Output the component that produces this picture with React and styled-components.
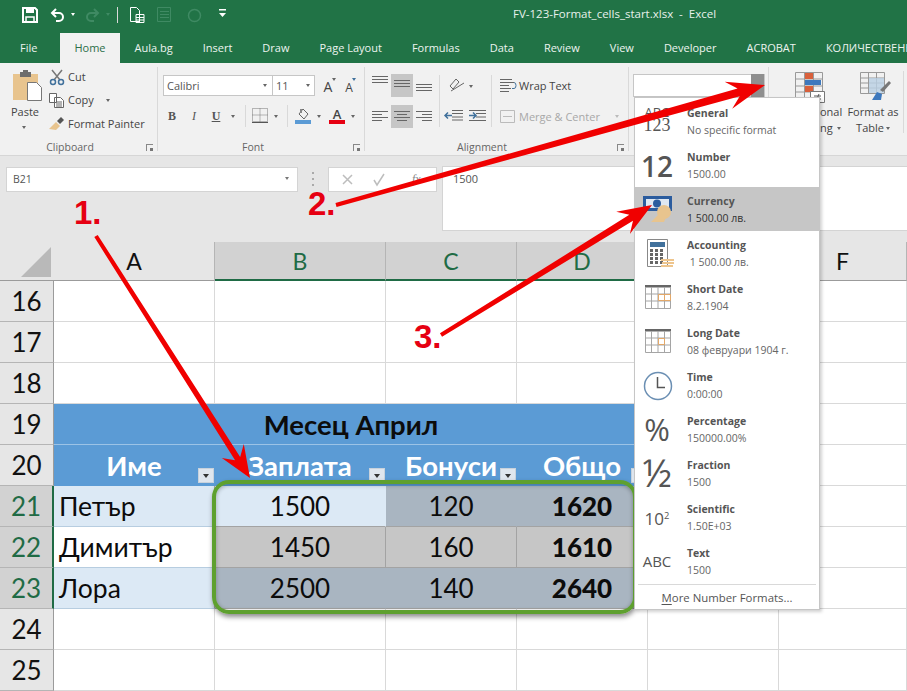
import React from "react";
import styled, { createGlobalStyle, css } from "styled-components";

const green = "#217346";
const uiFont = `"Open Sans", "Noto Sans", "Liberation Sans", sans-serif`;
const sheetFont = `Lato, "Noto Sans", sans-serif`;

const GlobalStyle = createGlobalStyle`
  html, body { margin: 0; padding: 0; background: #fff; }
  body { font-family: ${uiFont}; overflow: hidden; }
`;

const at = css`
  position: absolute;
  left: ${(p) => p.$x}px;
  top: ${(p) => p.$y}px;
`;

const Page = styled.div`
  position: relative;
  width: 907px;
  height: 691px;
  overflow: hidden;
  background: #e6e6e6;
`;

const TitleBar = styled.div`
  position: absolute;
  inset: 0 0 auto 0;
  height: 33px;
  background: ${green};
`;

const Title = styled.div`
  position: absolute;
  left: 513px;
  top: 6px;
  color: #e8f1ec;
  font-size: 11.5px;
  line-height: 16px;
  white-space: pre;
`;

const TabStrip = styled.div`
  position: absolute;
  left: 0;
  right: 0;
  top: 33px;
  height: 30px;
  padding-left: 5px;
  display: flex;
  background: ${green};
  overflow: hidden;
`;

const Tab = styled.div`
  flex: none;
  padding: 0 ${(p) => (p.$active ? 14 : 15)}px;
  font-size: 11px;
  line-height: 30px;
  white-space: nowrap;
  color: ${(p) => (p.$active ? "#2c6e49" : "#edf4f0")};
  background: ${(p) => (p.$active ? "#f1f1f1" : "transparent")};
  &:first-child {
    margin-right: 8px;
  }
`;

const Ribbon = styled.div`
  position: absolute;
  left: 0;
  right: 0;
  top: 63px;
  height: 92px;
  background: #f1f1f1;
  border-bottom: 1px solid #d6d6d6;
`;

const Divider = styled.div`
  ${at}
  width: 1px;
  height: ${(p) => p.$h}px;
  background: #d9d9d9;
`;

const RibbonText = styled.div`
  ${at}
  transform: translateY(-50%);
  font-size: 11px;
  line-height: 14px;
  white-space: nowrap;
  color: ${(p) => (p.$dim ? "#a8a8a8" : "#444")};
`;

const CenteredText = styled(RibbonText)`
  transform: translate(-50%, -50%);
  text-align: center;
`;

const GroupLabel = styled(CenteredText)`
  color: #666;
  font-size: 10.5px;
`;

const FontLetter = styled(CenteredText)`
  font-size: ${(p) => p.$size}px;
  font-weight: ${(p) => p.$weight || 400};
`;

const Caret = styled.div`
  ${at}
  width: 0;
  height: 0;
  border-left: 2.5px solid transparent;
  border-right: 2.5px solid transparent;
  border-top: 3px solid ${(p) => p.$color || "#666"};
`;

const Launcher = styled.div`
  ${at}
  width: 6px;
  height: 6px;
  border-left: 1px solid #888;
  border-top: 1px solid #888;
  &::after {
    content: "";
    position: absolute;
    right: 0;
    bottom: 0;
    width: 3px;
    height: 3px;
    background: #777;
  }
`;

const ComboBox = styled.div`
  ${at}
  width: ${(p) => p.$w}px;
  height: ${(p) => p.$h}px;
  box-sizing: border-box;
  background: #fff;
  border: 1px solid #c6c6c6;
  padding-left: 3px;
  font-size: 11px;
  line-height: ${(p) => p.$h - 2}px;
  color: #555;
`;

const NumberDrop = styled.div`
  ${at}
  width: 13px;
  height: 23px;
  background: #8f8f8f;
`;

const Highlight = styled.div`
  ${at}
  width: 22px;
  height: 23px;
  background: #c6c6c6;
`;

const StyleChar = styled.div`
  ${at}
  width: 14px;
  text-align: center;
  font-family: "Liberation Serif", serif;
  font-size: 12px;
  line-height: 14px;
  color: #555;
  font-weight: ${(p) => (p.$bold ? 700 : 400)};
  font-style: ${(p) => (p.$italic ? "italic" : "normal")};
  text-decoration: ${(p) => (p.$under ? "underline" : "none")};
`;

const Glyph = styled.svg`
  ${at}
  display: block;
  overflow: visible;
`;

const NameBox = styled.div`
  position: absolute;
  left: 6px;
  top: 167px;
  width: 292px;
  height: 25px;
  box-sizing: border-box;
  background: #fff;
  border: 1px solid #d4d4d4;
  padding-left: 6px;
  font-size: 10.5px;
  line-height: 23px;
  color: #555;
`;

const FormulaButtons = styled.div`
  position: absolute;
  left: 328px;
  top: 167px;
  width: 109px;
  height: 25px;
  box-sizing: border-box;
  background: #fff;
  border: 1px solid #d4d4d4;
`;

const FxMark = styled.div`
  position: absolute;
  left: 412px;
  top: 172px;
  font-family: "Liberation Serif", serif;
  font-style: italic;
  font-size: 12px;
  line-height: 14px;
  color: #888;
`;

const FormulaInput = styled.div`
  position: absolute;
  left: 442px;
  right: 0;
  top: 166px;
  height: 65px;
  box-sizing: border-box;
  background: #fff;
  border: 1px solid #d4d4d4;
  border-right: 0;
  padding: 4px 10px;
  font-size: 11px;
  line-height: 16px;
  color: #555;
`;

const Sheet = styled.div`
  position: absolute;
  left: 0;
  top: 242px;
  display: grid;
  grid-template-columns: 54px 161px 171px 131px 131px 131px 128px;
  grid-template-rows: 39px repeat(10, 41px);
  background: #fff;
  font-family: ${sheetFont};
`;

const Corner = styled.div`
  background: #e6e6e6;
  border-bottom: 1px solid #9b9b9b;
  position: relative;
  &::after {
    content: "";
    position: absolute;
    right: 3px;
    bottom: 3px;
    border-left: 30px solid transparent;
    border-bottom: 30px solid #b9b9b9;
  }
`;

const ColHead = styled.div`
  display: flex;
  align-items: center;
  justify-content: center;
  font-size: 23px;
  box-sizing: border-box;
  background: ${(p) => (p.$selected ? "#d2d2d2" : "#e6e6e6")};
  color: ${(p) => (p.$selected ? "#1f6b45" : "#111")};
  border-right: 1px solid #b5b5b5;
  border-bottom: ${(p) => (p.$selected ? "2px solid #1f6b45" : "1px solid #9b9b9b")};
`;

const RowHead = styled.div`
  display: flex;
  align-items: center;
  justify-content: center;
  font-size: 26px;
  box-sizing: border-box;
  background: ${(p) => (p.$selected ? "#d2d2d2" : "#e6e6e6")};
  color: ${(p) => (p.$selected ? "#1f6b45" : "#111")};
  border-bottom: 1px solid #b5b5b5;
  border-right: ${(p) => (p.$selected ? "2px solid #1f6b45" : "1px solid #9b9b9b")};
`;

const Cell = styled.div`
  position: relative;
  display: flex;
  align-items: center;
  justify-content: ${(p) => (p.$left ? "flex-start" : "center")};
  padding-left: ${(p) => (p.$left ? "5px" : 0)};
  box-sizing: border-box;
  font-size: ${(p) => (p.$left ? 26.5 : 26)}px;
  font-weight: ${(p) => (p.$bold ? 900 : 400)};
  color: #0c0c0c;
  background: ${(p) => p.$bg || "#fff"};
  border-right: 1px solid ${(p) => p.$vline || "#d9d9d9"};
  border-bottom: 1px solid ${(p) => p.$line || "#d9d9d9"};
`;

const BannerCell = styled(Cell)`
  grid-column: span 4;
  font-weight: 700;
  font-size: 27.5px;
  background: #5b9bd5;
  border-right: 0;
  border-bottom: 1px solid #9cc3e6;
`;

const HeaderCell = styled(Cell)`
  font-weight: 700;
  font-size: 27.5px;
  color: #fff;
  background: #5b9bd5;
  border-color: #5b9bd5;
`;

const FilterButton = styled.div`
  position: absolute;
  right: 0;
  bottom: 2px;
  width: 16px;
  height: 15px;
  background: #dfe6ee;
  border: 1px solid #c8d2dc;
  box-sizing: border-box;
  &::after {
    content: "";
    position: absolute;
    left: 4px;
    top: 5px;
    border-left: 3px solid transparent;
    border-right: 3px solid transparent;
    border-top: 4px solid #333;
  }
`;

const GreenFrame = styled.div`
  position: absolute;
  left: 212px;
  top: 480px;
  width: 425px;
  height: 134px;
  box-sizing: border-box;
  border: 4px solid #5ea02f;
  border-radius: 17px;
  box-shadow: 1px 3px 5px rgba(0, 0, 0, 0.45), inset 0 1px 4px rgba(0, 0, 0, 0.3);
`;

const Menu = styled.div`
  position: absolute;
  left: 634px;
  top: 97px;
  width: 186px;
  height: 513px;
  box-sizing: border-box;
  padding: 1px 0;
  background: #fff;
  border: 1px solid #c6c6c6;
  box-shadow: 2px 2px 3px rgba(0, 0, 0, 0.18);
`;

const MenuRow = styled.div`
  position: relative;
  height: 44px;
  background: ${(p) => (p.$active ? "#c6c6c6" : "transparent")};
`;

const MenuLabel = styled.div`
  position: absolute;
  left: 52px;
  top: 7px;
  font-size: 10.5px;
  line-height: 14px;
  font-weight: 700;
  color: #555;
`;

const MenuValue = styled.div`
  position: absolute;
  left: 52px;
  top: 24px;
  font-size: 10.5px;
  line-height: 14px;
  white-space: pre;
  color: ${(p) => (p.$active ? "#333" : "#666")};
`;

const MenuGlyph = styled.div`
  position: absolute;
  left: 6px;
  top: ${(p) => p.$top || 0}px;
  width: 32px;
  text-align: center;
  color: #555;
  font-family: ${(p) => (p.$serif ? `"Liberation Serif", serif` : uiFont)};
  font-size: ${(p) => p.$size}px;
  font-weight: ${(p) => p.$weight || 400};
  line-height: 44px;
  white-space: nowrap;
  sup {
    font-size: 0.55em;
    line-height: 0;
    vertical-align: 0.6em;
  }
`;

const MenuFooter = styled.div`
  margin: 1px 3px 0;
  border-top: 1px solid #d9d9d9;
  text-align: center;
  font-size: 11.4px;
  line-height: 26px;
  color: #555;
  u { text-underline-offset: 2px; }
`;

const Overlay = styled.svg`
  position: absolute;
  inset: 0;
  pointer-events: none;
`;

const StepLabel = styled.div`
  ${at}
  font-family: "Liberation Sans", Arial, sans-serif;
  font-weight: 700;
  font-size: 33px;
  line-height: 30px;
  color: #e60012;
`;

const tabs = ["File", "Home", "Aula.bg", "Insert", "Draw", "Page Layout", "Formulas", "Data", "Review", "View", "Developer", "ACROBAT", "КОЛИЧЕСТВЕННИ"];
const columns = ["A", "B", "C", "D", "E", "F"];

const formats = [
  {
    label: "General",
    value: "No specific format",
    glyph: (
      <>
        <MenuGlyph $size={13} $top={-9}>ABC</MenuGlyph>
        <MenuGlyph $serif $size={18} $top={4}>123</MenuGlyph>
      </>
    ),
  },
  { label: "Number", value: "1500.00", glyph: <MenuGlyph $size={28} $weight={600} $top={1}>12</MenuGlyph> },
  { label: "Currency", value: "1 500.00 лв.", active: true, icon: "bill" },
  { label: "Accounting", value: " 1 500.00 лв.", icon: "calc" },
  { label: "Short Date", value: "8.2.1904", icon: "cal" },
  { label: "Long Date", value: "08 февруари 1904 г.", icon: "cal2" },
  { label: "Time", value: "0:00:00", icon: "clock" },
  { label: "Percentage", value: "150000.00%", glyph: <MenuGlyph $size={31}>%</MenuGlyph> },
  { label: "Fraction", value: "1500", glyph: <MenuGlyph $size={38} $top={-1}>½</MenuGlyph> },
  { label: "Scientific", value: "1.50E+03", glyph: <MenuGlyph $size={17} $top={2}>10<sup>2</sup></MenuGlyph> },
  { label: "Text", value: "1500", glyph: <MenuGlyph $size={15}>ABC</MenuGlyph> },
];

// tapered shaft plus a notched head, computed from the two end points
function arrowPoints(x1, y1, x2, y2, tail, neck, len, half) {
  const d = Math.hypot(x2 - x1, y2 - y1);
  const ux = (x2 - x1) / d;
  const uy = (y2 - y1) / d;
  const nx = -uy;
  const ny = ux;
  const pt = (back, side) => `${x2 - ux * back + nx * side},${y2 - uy * back + ny * side}`;
  return [
    pt(d, tail / 2), pt(len * 0.72, neck / 2), pt(len, half), pt(0, 0),
    pt(len, -half), pt(len * 0.72, -neck / 2), pt(d, -tail / 2),
  ].join(" ");
}

const SaveIcon = (p) => (
  <Glyph {...p} width="16" height="16" viewBox="0 0 16 16" fill="none">
    <path d="M1 1h12l2 2v12H1z" stroke="#fff" strokeWidth="2" />
    <path d="M4 1h8v5H4z" fill="#fff" />
    <path d="M4 10h8v5H4z" stroke="#fff" strokeWidth="1.5" />
  </Glyph>
);

const UndoIcon = ({ color, flip, ...p }) => (
  <Glyph {...p} width="15" height="14" viewBox="0 0 15 14" fill="none">
    <g transform={flip ? "translate(15 0) scale(-1 1)" : undefined} stroke={color} strokeWidth="2">
      <path d="M2 5h7a4 4 0 0 1 0 8H6" />
      <path d="M6 1L2 5l4 4" />
    </g>
  </Glyph>
);

const LinesIcon = ({ rows, ...p }) => (
  <Glyph {...p} width="16" height="14" viewBox="0 0 16 14" fill="none" stroke="#666">
    {rows.map(([x, y, w]) => (
      <path key={y} d={`M${x} ${y}.5h${w}`} />
    ))}
  </Glyph>
);

const Calendar = ({ mark }) => (
  <Glyph $x={10} $y={10} width="26" height="24" viewBox="0 0 26 24" fill="none">
    <path d="M0 0h26v2.5H0z" fill="#666" />
    <path d="M.5 2v21.5h25V2M.5 9h25M.5 16h25M6.5 2v21M13 2v21M19.5 2v21" stroke="#a5a5a5" />
    {mark === "short"
      ? <path d="M13.5 9.5h6v6h-6zM19.5 9.5h6v6h-6z" stroke="#e3a869" />
      : <path d="M13.5 9.5h6v6h-6z" stroke="#e3a869" />}
  </Glyph>
);

function MenuIcon({ name }) {
  if (name === "bill") {
    return (
      <Glyph $x={8} $y={9} width="30" height="26" viewBox="0 0 30 26">
        <path d="M0 0h29v15H0z" fill="#2b5c9e" />
        <path d="M3 3h23v9H3z" fill="#dfe8f2" />
        <circle cx="14" cy="7.5" r="4" fill="#2b5c9e" />
        <circle cx="21" cy="16" r="7" fill="#e8c48e" />
        <path d="M8 26l8-8 8 1-3 7z" fill="#e8c48e" />
      </Glyph>
    );
  }
  if (name === "calc") {
    return (
      <Glyph $x={12} $y={8} width="28" height="30" viewBox="0 0 28 30">
        <path d="M.5.5h20v27H.5z" fill="#fff" stroke="#888" />
        <path d="M3 3h15v5H3z" fill="#41719c" />
        {[10, 14, 18, 22].map((y) => (
          <path key={y} d={`M3 ${y}h3v3H3zM8 ${y}h3v3H8zM13 ${y}h3v3h-3z`} fill="#666" />
        ))}
        <path d="M14 20h13v2H14zM15 23h12v2H15zM14 26h12v2H14z" fill="#eec58d" />
      </Glyph>
    );
  }
  if (name === "cal") return <Calendar mark="short" />;
  if (name === "cal2") return <Calendar mark="long" />;
  return (
    <Glyph $x={8} $y={8} width="30" height="30" viewBox="0 0 30 30" fill="none">
      <circle cx="15" cy="15" r="13.5" stroke="#6b8fb3" strokeWidth="1.5" />
      <path d="M14.5 6v10.5H22" stroke="#555" strokeWidth="1.5" />
    </Glyph>
  );
}

const rows = [
  { n: 16 }, { n: 17 }, { n: 18 },
  { n: 19, kind: "banner" },
  { n: 20, kind: "header" },
  { n: 21, selected: true, cells: ["Петър", "1500", "120", "1620"], bgs: ["#dce9f5", "#dce9f5", "#a9b5c1", "#a9b5c1"] },
  { n: 22, selected: true, lined: true, cells: ["Димитър", "1450", "160", "1610"], bgs: ["#fff", "#c6c6c6", "#c6c6c6", "#c6c6c6"] },
  { n: 23, selected: true, cells: ["Лора", "2500", "140", "2640"], bgs: ["#dce9f5", "#a9b5c1", "#a9b5c1", "#a9b5c1"] },
  { n: 24 }, { n: 25 },
];

function SheetRow({ row }) {
  const head = <RowHead $selected={row.selected}>{row.n}</RowHead>;
  const blanks = (count) => Array.from({ length: count }, (_, i) => <Cell key={i} />);

  if (row.kind === "banner") {
    return <>{head}<BannerCell>Месец Април</BannerCell>{blanks(2)}</>;
  }
  if (row.kind === "header") {
    return (
      <>
        {head}
        {["Име", "Заплата", "Бонуси", "Общо"].map((h) => (
          <HeaderCell key={h}>{h}<FilterButton /></HeaderCell>
        ))}
        {blanks(2)}
      </>
    );
  }
  if (row.cells) {
    return (
      <>
        {head}
        {row.cells.map((text, i) => (
          <Cell
            key={i}
            $left={i === 0}
            $bold={i === 3}
            $bg={row.bgs[i]}
            $line={i === 0 ? "#b7cde0" : "#a3a3a3"}
            $vline={row.lined || i === 0 ? "#a3a3a3" : row.bgs[i]}
          >
            {text}
          </Cell>
        ))}
        {blanks(2)}
      </>
    );
  }
  return <>{head}{blanks(6)}</>;
}

const App = () => {
  return (
    <Page>
      <GlobalStyle />
      <TitleBar>
        <SaveIcon $x={22} $y={7} />
        <UndoIcon $x={50} $y={8} color="#fff" />
        <Caret $x={71} $y={13} $color="#fff" />
        <UndoIcon $x={85} $y={8} color="#3f8a63" flip />
        <Caret $x={106} $y={13} $color="#3f8a63" />
        <Divider $x={117} $y={7} $h={16} />
        <Glyph $x={130} $y={7} width="15" height="16" viewBox="0 0 15 16" fill="none" stroke="#fff">
          <path d="M.5.5h6l3 3v11h-9zM6 7.5h8v8H6zM6 10.5h8M6 13h8M9.5 8v7" />
        </Glyph>
        <Glyph $x={157} $y={7} width="15" height="16" viewBox="0 0 15 16" fill="none" stroke="#3f8a63">
          <path d="M.5.5h13v14H.5zM3 4.5h9M3 7.5h9M3 10.5h9" />
        </Glyph>
        <Glyph $x={187} $y={8} width="15" height="15" viewBox="0 0 15 15" fill="none" stroke="#3f8a63" strokeWidth="1.5">
          <circle cx="7.5" cy="7.5" r="6" />
        </Glyph>
        <Glyph $x={219} $y={9} width="7" height="10" viewBox="0 0 7 10" fill="#fff">
          <path d="M0 0h7v1.5H0zM0 4h7L3.5 8z" />
        </Glyph>
        <Title>FV-123-Format_cells_start.xlsx  -  Excel</Title>
      </TitleBar>

      <TabStrip>
        {tabs.map((t) => (
          <Tab key={t} $active={t === "Home"}>{t}</Tab>
        ))}
      </TabStrip>

      <Ribbon>
        <Divider $x={157} $y={4} $h={84} />
        <Divider $x={364} $y={4} $h={84} />
        <Divider $x={628} $y={4} $h={84} />
        <Divider $x={768} $y={4} $h={84} />

        {/* Clipboard */}
        <Glyph $x={13} $y={7} width="29" height="31" viewBox="0 0 29 31">
          <path d="M0 4h25v26H0z" fill="#e8c48e" />
          <path d="M7 2h11v5H7z" fill="#6d6d6d" />
          <path d="M10 0h5v3h-5z" fill="#6d6d6d" />
          <path d="M14.5 12.5h9l5 5v13h-14z" fill="#fff" stroke="#777" />
        </Glyph>
        <CenteredText $x={25} $y={49}>Paste</CenteredText>
        <Caret $x={22} $y={63} />
        <Glyph $x={49} $y={7} width="16" height="15" viewBox="0 0 16 15" fill="none">
          <path d="M3 0l8 10M13 0L5 10" stroke="#777" strokeWidth="1.5" />
          <circle cx="4" cy="12" r="2.5" stroke="#41719c" strokeWidth="1.5" />
          <circle cx="12" cy="12" r="2.5" stroke="#41719c" strokeWidth="1.5" />
        </Glyph>
        <RibbonText $x={68} $y={14}>Cut</RibbonText>
        <Glyph $x={49} $y={30} width="15" height="15" viewBox="0 0 15 15" fill="#fff" stroke="#666">
          <path d="M.5.5h7v9h-7zM5.5 4.5h6l3 3v7h-9z" />
          <path d="M7 9h6M7 11h6M7 13h6" />
        </Glyph>
        <RibbonText $x={68} $y={37}>Copy</RibbonText>
        <Caret $x={106} $y={36} />
        <Glyph $x={49} $y={53} width="16" height="15" viewBox="0 0 16 15">
          <path d="M0 13L7 6l4 4-4 4z" fill="#e8c48e" />
          <path d="M8 5l4-4 3 3-4 4z" fill="#555" />
        </Glyph>
        <RibbonText $x={68} $y={61}>Format Painter</RibbonText>
        <GroupLabel $x={70} $y={84}>Clipboard</GroupLabel>
        <Launcher $x={146} $y={81} />

        {/* Font */}
        <ComboBox $x={163} $y={12} $w={110} $h={21}>Calibri</ComboBox>
        <Caret $x={263} $y={21} />
        <ComboBox $x={272} $y={12} $w={43} $h={21}>11</ComboBox>
        <Caret $x={306} $y={21} />
        <FontLetter $x={328} $y={24} $size={14}>A</FontLetter>
        <Caret $x={332} $y={15} $color="#666" />
        <FontLetter $x={349} $y={25} $size={12}>A</FontLetter>
        <Caret $x={352} $y={15} $color="#41719c" />
        <StyleChar $x={165} $y={46} $bold>B</StyleChar>
        <StyleChar $x={187} $y={46} $italic>I</StyleChar>
        <StyleChar $x={209} $y={46} $under $bold>U</StyleChar>
        <Caret $x={231} $y={52} />
        <Divider $x={245} $y={42} $h={22} />
        <Glyph $x={252} $y={45} width="16" height="15" viewBox="0 0 16 15" fill="none" stroke="#777" strokeDasharray="1 1">
          <path d="M.5.5h15v13H.5zM8 .5v13M.5 7h15" />
          <path d="M0 14.5h16" strokeDasharray="none" stroke="#555" />
        </Glyph>
        <Caret $x={274} $y={52} />
        <Divider $x={287} $y={42} $h={22} />
        <Glyph $x={295} $y={43} width="16" height="20" viewBox="0 0 16 20" fill="none">
          <path d="M4 8l4-5 5 5-4 5z" stroke="#666" />
          <path d="M5 3h2v4H5z" fill="#888" />
          <path d="M0 14h16v4H0z" fill="#5b9bd5" />
        </Glyph>
        <Caret $x={317} $y={52} />
        <FontLetter $x={337} $y={51} $size={13} $weight={600}>A</FontLetter>
        <Glyph $x={329} $y={57} width="16" height="4" viewBox="0 0 16 4">
          <path d="M0 0h16v4H0z" fill="#e60012" />
        </Glyph>
        <Caret $x={351} $y={52} />
        <GroupLabel $x={253} $y={84}>Font</GroupLabel>
        <Launcher $x={353} $y={81} />

        {/* Alignment */}
        <Highlight $x={391} $y={11} />
        <Highlight $x={391} $y={42} />
        <LinesIcon $x={372} $y={12} rows={[[0, 1, 16], [0, 4, 16], [0, 7, 16]]} />
        <LinesIcon $x={394} $y={16} rows={[[0, 1, 16], [0, 4, 16], [0, 7, 16]]} />
        <LinesIcon $x={416} $y={20} rows={[[0, 1, 16], [0, 4, 16], [0, 7, 16]]} />
        <LinesIcon $x={372} $y={47} rows={[[0, 1, 16], [0, 4, 10], [0, 7, 16], [0, 10, 10]]} />
        <LinesIcon $x={394} $y={47} rows={[[0, 1, 16], [3, 4, 10], [0, 7, 16], [3, 10, 10]]} />
        <LinesIcon $x={416} $y={47} rows={[[0, 1, 16], [6, 4, 10], [0, 7, 16], [6, 10, 10]]} />
        <Divider $x={439} $y={12} $h={52} />
        <Glyph $x={448} $y={14} width="16" height="16" viewBox="0 0 16 16" fill="none" stroke="#666">
          <path d="M2 9l6-7 3 3-6 7zM3 14l13-8" />
        </Glyph>
        <Caret $x={469} $y={22} />
        <Glyph $x={445} $y={46} width="42" height="14" viewBox="0 0 42 14" fill="none" stroke="#666">
          <path d="M7 1.5h11M7 4.5h11M7 8h11M7 11h11M24 1.5h17M31 4.5h10M31 8h10M24 11.5h17" />
          <path d="M7 6.5H0M3 3.5l-3 3 3 3M24 6.5h7M28 3.5l3 3-3 3" stroke="#41719c" strokeWidth="1.5" />
        </Glyph>
        <Divider $x={491} $y={12} $h={52} />
        <Glyph $x={500} $y={15} width="16" height="15" viewBox="0 0 16 15" fill="none" stroke="#666">
          <path d="M0 1.5h12M0 4.5h14M0 7.5h9M0 10.5h11M0 13.5h9" />
          <path d="M14 4.5a2 3 0 0 1 0 6h-2" stroke="#41719c" />
        </Glyph>
        <RibbonText $x={519} $y={23}>Wrap Text</RibbonText>
        <Glyph $x={500} $y={47} width="15" height="13" viewBox="0 0 15 13" fill="none" stroke="#bbb">
          <path d="M.5.5h14v12H.5zM3 6.5h9" />
        </Glyph>
        <RibbonText $x={519} $y={54} $dim>Merge &amp; Center</RibbonText>
        <Caret $x={615} $y={52} $color="#bbb" />
        <GroupLabel $x={482} $y={84}>Alignment</GroupLabel>
        <Launcher $x={617} $y={81} />

        {/* Number combo, styles */}
        <ComboBox $x={633} $y={11} $w={132} $h={23} />
        <NumberDrop $x={751} $y={11} />
        <Glyph $x={795} $y={9} width="30" height="32" viewBox="0 0 30 32" fill="none">
          <path d="M.5.5h27v26H.5zM9.5.5v26M18.5.5v26M.5 7h27M.5 14h27M.5 20h27" stroke="#999" />
          <path d="M10 1h8v6h-8zM10 14h8v6h-8z" fill="#d9603b" />
          <path d="M10 8h16v5H10z" fill="#3d78bd" />
          <path d="M15.5 19.5h14v11h-14z" fill="#fff" stroke="#777" />
          <path d="M19 24h7M19 27h7M24 22l-3 7" stroke="#555" />
        </Glyph>
        <RibbonText $x={820} $y={49}>onal</RibbonText>
        <RibbonText $x={820} $y={65}>ng</RibbonText>
        <Caret $x={837} $y={64} />
        <Glyph $x={860} $y={9} width="32" height="32" viewBox="0 0 32 32" fill="none">
          <path d="M.5.5h24v21H.5zM.5 6h24M.5 11h24M.5 16h24M8.5.5v21M16.5.5v21" stroke="#999" />
          <path d="M9 6h15v15H9z" fill="#b9cfe3" opacity=".8" />
          <path d="M20 18l9-9 2 2-8 9z" fill="#777" />
          <path d="M12 28l5-8 5 2-1 6z" fill="#3d78bd" />
        </Glyph>
        <CenteredText $x={873} $y={49}>Format as</CenteredText>
        <CenteredText $x={870} $y={65}>Table</CenteredText>
        <Caret $x={886} $y={64} />
        <Divider $x={903} $y={8} $h={62} />
      </Ribbon>

      <NameBox>B21</NameBox>
      <Caret $x={285} $y={177} $color="#777" />
      <Glyph $x={312} $y={172} width="3" height="16" viewBox="0 0 3 16" fill="#aaa">
        <path d="M0 0h2v2H0zM0 6h2v2H0zM0 12h2v2H0z" />
      </Glyph>
      <FormulaButtons />
      <Glyph $x={342} $y={173} width="64" height="14" viewBox="0 0 64 14" fill="none" stroke="#bdbdbd" strokeWidth="1.5">
        <path d="M1 2l9 9M10 2l-9 9M32 7l3 5 7-11" />
      </Glyph>
      <FxMark>fx</FxMark>
      <FormulaInput>1500</FormulaInput>

      <Sheet>
        <Corner />
        {columns.map((c) => (
          <ColHead key={c} $selected={c === "B" || c === "C" || c === "D"}>{c}</ColHead>
        ))}
        {rows.map((row) => (
          <SheetRow key={row.n} row={row} />
        ))}
      </Sheet>

      <GreenFrame />

      <Menu>
        {formats.map((f) => (
          <MenuRow key={f.label} $active={f.active}>
            {f.glyph}
            {f.icon && <MenuIcon name={f.icon} />}
            <MenuLabel>{f.label}</MenuLabel>
            <MenuValue $active={f.active}>{f.value}</MenuValue>
          </MenuRow>
        ))}
        <MenuFooter><u>M</u>ore Number Formats...</MenuFooter>
      </Menu>

      <Overlay width="907" height="691" viewBox="0 0 907 691">
        <polygon points={arrowPoints(96, 236, 250, 478, 4, 6, 32, 13)} fill="#f00000" />
        <polygon points={arrowPoints(336, 205, 765, 85, 4, 8, 38, 14)} fill="#f00000" />
        <polygon points={arrowPoints(441, 335, 652, 205, 4, 7, 34, 13)} fill="#f00000" />
      </Overlay>
      <StepLabel $x={74} $y={198}>1.</StepLabel>
      <StepLabel $x={308} $y={189}>2.</StepLabel>
      <StepLabel $x={414} $y={322}>3.</StepLabel>
    </Page>
  );
};

export default App;
